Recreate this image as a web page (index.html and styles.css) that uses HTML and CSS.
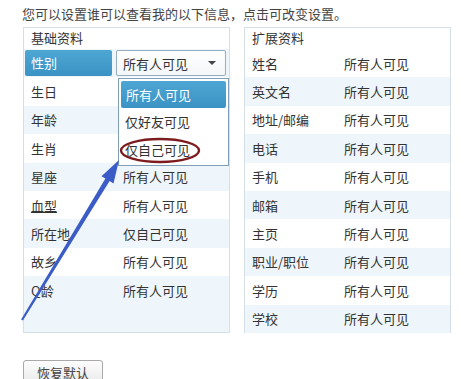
FILE: index.html
```html
<!DOCTYPE html>
<html lang="zh-CN">
<head>
  <meta charset="UTF-8" />
  <title>隐私设置</title>
  <link rel="stylesheet" href="styles.css">
</head>
<body>

<p class="intro">您可以设置谁可以查看我的以下信息，点击可改变设置。</p>

<div class="panels">
  <div class="panel">
    <div class="panel-head">基础资料</div>
    <div class="row stripe">
      <span class="label active">性别</span>
      <span class="select">所有人可见<i class="caret"></i></span>
    </div>
    <div class="row"><span class="label">生日</span><span class="value">所有人可见</span></div>
    <div class="row stripe"><span class="label">年龄</span><span class="value">所有人可见</span></div>
    <div class="row"><span class="label">生肖</span><span class="value">所有人可见</span></div>
    <div class="row stripe"><span class="label">星座</span><span class="value">所有人可见</span></div>
    <div class="row"><span class="label"><u>血型</u></span><span class="value">所有人可见</span></div>
    <div class="row stripe"><span class="label">所在地</span><span class="value">仅自己可见</span></div>
    <div class="row"><span class="label">故乡</span><span class="value">所有人可见</span></div>
    <div class="row stripe"><span class="label">Q龄</span><span class="value">所有人可见</span></div>
  </div>

  <div class="panel">
    <div class="panel-head">扩展资料</div>
    <div class="row"><span class="label">姓名</span><span class="value">所有人可见</span></div>
    <div class="row stripe"><span class="label">英文名</span><span class="value">所有人可见</span></div>
    <div class="row"><span class="label">地址/邮编</span><span class="value">所有人可见</span></div>
    <div class="row stripe"><span class="label">电话</span><span class="value">所有人可见</span></div>
    <div class="row"><span class="label">手机</span><span class="value">所有人可见</span></div>
    <div class="row stripe"><span class="label">邮箱</span><span class="value">所有人可见</span></div>
    <div class="row"><span class="label">主页</span><span class="value">所有人可见</span></div>
    <div class="row stripe"><span class="label">职业/职位</span><span class="value">所有人可见</span></div>
    <div class="row"><span class="label">学历</span><span class="value">所有人可见</span></div>
    <div class="row stripe"><span class="label">学校</span><span class="value">所有人可见</span></div>
  </div>
</div>

<button class="reset">恢复默认</button>

<!-- open dropdown of the 性别 select -->
<ul class="dropdown">
  <li class="on">所有人可见</li>
  <li>仅好友可见</li>
  <li>仅自己可见</li>
</ul>

<!-- annotations drawn over the screenshot -->
<svg class="marks" width="475" height="379" viewBox="0 0 475 379">
  <ellipse cx="160" cy="150.5" rx="39" ry="11.5" fill="none" stroke="#7d1c1f" stroke-width="2.4" />
  <polygon fill="#3b5cc6" points="119,160 113.5,183.4 109.6,181.1 22.9,320.5 21.1,319.5 105.4,178.5 101.5,176.2" />
</svg>

</body>
</html>
```

FILE: styles.css
```css
body { margin: 0; font-family: "Noto Sans CJK SC", "Microsoft YaHei", sans-serif; font-size: 13px; color: #333; background: #fff; position: relative; width: 475px; height: 379px; overflow: hidden; }
.intro { margin: 0; padding: 5px 0 0 22px; height: 22px; line-height: 17px; color: #444; }
.panels { display: flex; gap: 14px; padding-left: 23px; }
.panel { width: 205px; height: 304px; border: 1px solid #d5dfe6; background: #eef6fb; }
.panel-head { height: 21px; line-height: 19px; padding-left: 7px; background: #fff; }
.row { display: flex; align-items: center; height: 28.4px; background: #fff; }
.row.stripe { background: #eef6fb; }
.label { width: 92px; padding-left: 7px; flex-shrink: 0; }
.value { padding-left: 0; }
.label.active { width: 81px; margin-left: 1px; padding-left: 6px; height: 26px; line-height: 26px; color: #fff; border-radius: 2px; background: linear-gradient(#4ea6d3, #3a93c4); }
.select { display: flex; align-items: center; justify-content: space-between; margin-left: 4px; width: 102px; height: 24px; padding-left: 6px; border: 1px solid #98aebf; border-radius: 2px; background: linear-gradient(#fff, #f3f6f8); }
.caret { width: 0; height: 0; margin-right: 9px; border-left: 4px solid transparent; border-right: 4px solid transparent; border-top: 4px solid #444; }
.reset { display: block; margin: 27px 0 0 23px; width: 80px; height: 25px; padding: 0; font: inherit; color: #444; border: 1px solid #a9a9a9; border-radius: 3px; background: linear-gradient(#fdfdfd, #e9e9e9); }
.dropdown { position: absolute; left: 118px; top: 78px; width: 107px; margin: 0; padding: 1px; list-style: none; border: 1px solid #7f9fb8; background: #fff; }
.dropdown li { height: 28px; line-height: 28px; padding-left: 5px; }
.dropdown li.on { margin: 1px 1px 0 1px; height: 27px; color: #fff; border-radius: 2px; background: linear-gradient(#4ea6d3, #3a93c4); }
.marks { position: absolute; left: 0; top: 0; pointer-events: none; }
```
